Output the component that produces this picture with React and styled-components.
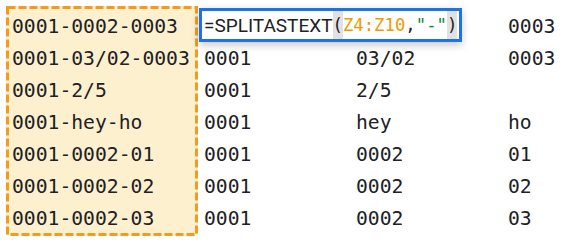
import React from "react";
import styled, { createGlobalStyle } from "styled-components";

const Global = createGlobalStyle`
  html, body { margin: 0; padding: 0; background: #ffffff; }
  body { width: 565px; height: 252px; overflow: hidden; }
`;

const Sheet = styled.div`
  display: flex;
  margin: 6px 0 0 6px;
  font-family: "DejaVu Sans Mono", "Liberation Mono", monospace;
  font-size: 19.7px;
  color: #202124;
`;

const Column = styled.div`
  position: relative;
  display: flex;
  flex-direction: column;
  width: ${(p) => p.$width}px;
  padding: 4px 0 2px;
  background: ${(p) => (p.$selected ? "#fdf0cf" : "transparent")};
  flex: ${(p) => (p.$grow ? "1" : "none")};
`;

const Cell = styled.div`
  position: relative;
  height: 32px;
  display: flex;
  align-items: center;
  padding-left: ${(p) => p.$pad}px;
  white-space: nowrap;
`;

const Outline = styled.svg`
  position: absolute;
  inset: 0;
  pointer-events: none;
`;

const Editor = styled.div`
  position: absolute;
  left: 1px;
  top: -2px;
  width: 263px;
  height: 34px;
  box-sizing: border-box;
  border: 3.5px solid #1a73e8;
  background: #ffffff;
  box-shadow: 0 3px 8px rgba(0, 0, 0, 0.22);
  display: flex;
  align-items: stretch;
  padding-left: 2px;
  font-family: Roboto, "Noto Sans", sans-serif;
  font-size: 19px;
  color: #202124;
  z-index: 2;
`;

const Tok = styled.span`
  display: flex;
  align-items: center;
  white-space: pre;
  font-family: ${(p) =>
    p.$mono ? '"DejaVu Sans Mono", "Liberation Mono", monospace' : "inherit"};
  font-size: ${(p) => (p.$mono ? "17.3px" : "inherit")};
  color: ${(p) => p.$color || "#202124"};
  background: ${(p) => (p.$paren ? "#e1e1e1" : "transparent")};
`;

const col1 = [
  "0001-0002-0003",
  "0001-03/02-0003",
  "0001-2/5",
  "0001-hey-ho",
  "0001-0002-01",
  "0001-0002-02",
  "0001-0002-03",
];
const col2 = ["", "0001", "0001", "0001", "0001", "0001", "0001"];
const col3 = ["", "03/02", "2/5", "hey", "0002", "0002", "0002"];
const col4 = ["0003", "0003", "", "ho", "01", "02", "03"];

export default function App() {
  return (
    <>
      <Global />
      <Sheet>
        <Column $width={192} $selected>
          {col1.map((t, i) => (
            <Cell key={i} $pad={6}>{t}</Cell>
          ))}
          <Outline width="192" height="230">
            <rect
              x="1.5"
              y="1.5"
              width="189"
              height="227"
              fill="none"
              stroke="#f29c1f"
              strokeWidth="3"
              strokeDasharray="8 3"
            />
          </Outline>
        </Column>
        <Column $width={152}>
          {col2.map((t, i) => (
            <Cell key={i} $pad={6}>
              {i === 0 ? (
                <Editor>
                  <Tok>=SPLITASTEXT</Tok>
                  <Tok $paren $mono>(</Tok>
                  <Tok $mono $color="#f29900">Z4:Z10</Tok>
                  <Tok $mono>,</Tok>
                  <Tok $mono $color="#188038">"-"</Tok>
                  <Tok $paren $mono>)</Tok>
                </Editor>
              ) : (
                t
              )}
            </Cell>
          ))}
        </Column>
        <Column $width={152}>
          {col3.map((t, i) => (
            <Cell key={i} $pad={6}>{t}</Cell>
          ))}
        </Column>
        <Column $grow>
          {col4.map((t, i) => (
            <Cell key={i} $pad={6}>{t}</Cell>
          ))}
        </Column>
      </Sheet>
    </>
  );
}
